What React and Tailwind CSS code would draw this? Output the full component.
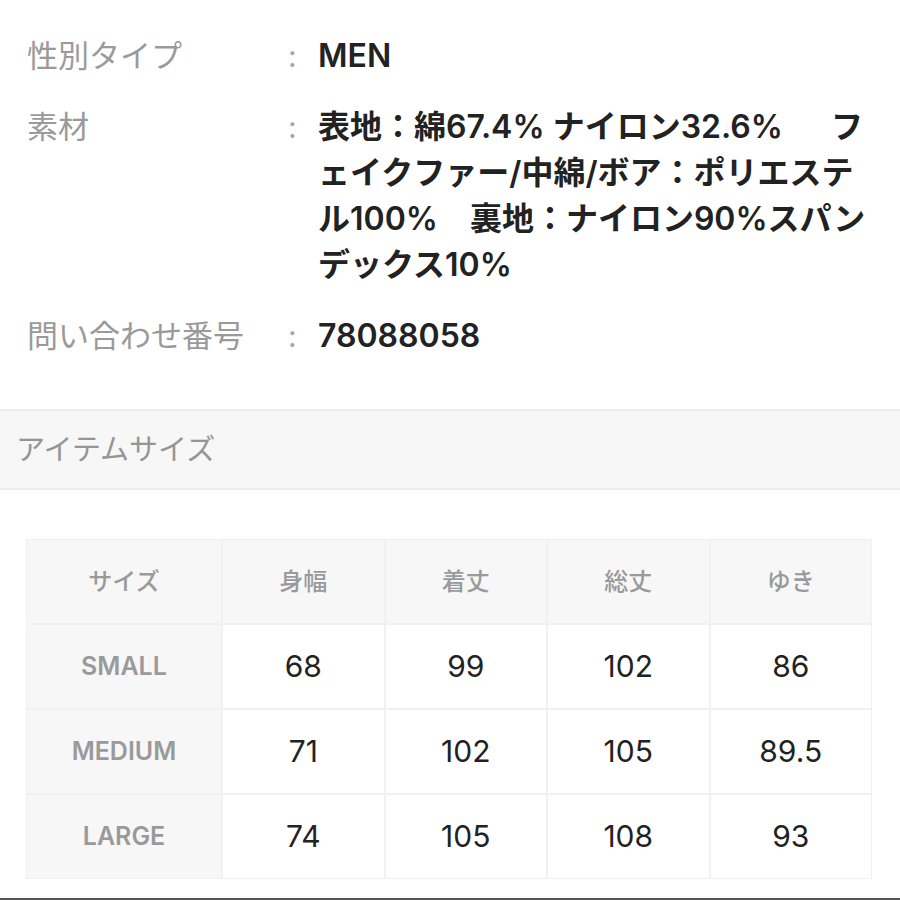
import React from 'react';

const jp = { fontFamily: '"Inter", "Noto Sans CJK JP", sans-serif' };

const specs = [
  { label: '性別タイプ', lines: ['MEN'] },
  {
    label: '素材',
    lines: [
      '表地：綿67.4% ナイロン32.6%　\u00a0\u00a0フ',
      'ェイクファー/中綿/ボア：ポリエステ',
      'ル100%　裏地：ナイロン90%スパン',
      'デックス10%',
    ],
  },
  { label: '問い合わせ番号', lines: ['78088058'] },
];

const columns = ['身幅', '着丈', '総丈', 'ゆき'];

const sizes = [
  { name: 'SMALL', values: ['68', '99', '102', '86'] },
  { name: 'MEDIUM', values: ['71', '102', '105', '89.5'] },
  { name: 'LARGE', values: ['74', '105', '108', '93'] },
];

function SpecRow({ label, lines }) {
  return (
    <div className="flex">
      <div className="w-[261px] shrink-0 text-[31px] leading-[46px] text-[#9a9a9a]">{label}</div>
      <div className="w-[30px] shrink-0 text-[30px] leading-[46px] text-[#a6a6a6]">:</div>
      <div className="flex-1 text-[32px] leading-[46px] font-semibold text-[#222222] whitespace-nowrap">
        {lines.map((line, i) => (
          <div key={i}>{line}</div>
        ))}
      </div>
    </div>
  );
}

export default function App() {
  const headCell = "h-[83px] flex items-center justify-center bg-[#f7f7f7] text-[24px] font-medium text-[#9a9a9a]";
  const dataCell = "h-[83px] flex items-center justify-center bg-white text-[30px] text-[#222222]";

  return (
    <div className="w-[900px] h-[900px] bg-white overflow-hidden flex flex-col" style={jp}>
      {/* spec list */}
      <div className="pt-[33px] pl-[27px] flex flex-col gap-[25px]">
        {specs.map((s) => (
          <SpecRow key={s.label} label={s.label} lines={s.lines} />
        ))}
      </div>

      {/* section heading */}
      <div className="mt-[50px] h-[81px] border-y-2 border-[#ededed] bg-[#f7f7f7] flex items-center pl-[16px]">
        <span className="text-[29px] text-[#959595]">アイテムサイズ</span>
      </div>

      {/* size table */}
      <div className="mt-[49px] ml-[26px] w-[846px] grid grid-cols-[194px_repeat(4,1fr)] gap-[2px] p-[1px] bg-[#f1f1f1]">
        <div className={headCell}>サイズ</div>
        {columns.map((c) => (
          <div key={c} className={headCell}>{c}</div>
        ))}
        {sizes.map((row) => (
          <React.Fragment key={row.name}>
            <div className="h-[83px] flex items-center justify-center bg-[#f7f7f7] text-[25px] font-semibold text-[#9a9a9a]">
              {row.name}
            </div>
            {row.values.map((v, i) => (
              <div key={i} className={dataCell}>{v}</div>
            ))}
          </React.Fragment>
        ))}
      </div>

      <div className="mt-auto h-[2px] bg-[#555555]" />
    </div>
  );
}
